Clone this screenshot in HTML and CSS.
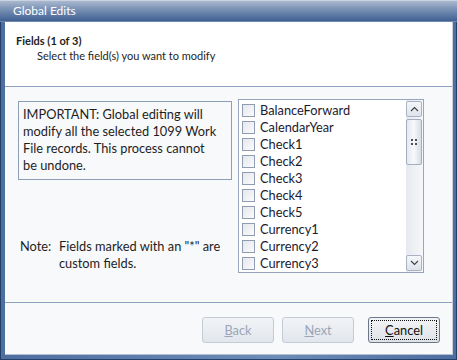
FILE: index.html
```html
<!DOCTYPE html>
<html lang="en">
<head>
    <meta charset="UTF-8">
    <title>Global Edits</title>
    <link rel="stylesheet" href="styles.css">
</head>
<body>
    <div class="window">
        <div class="titlebar">Global Edits</div>
        <div class="client">
            <div class="header">
                <div class="step-title">Fields (1 of 3)</div>
                <div class="step-desc">Select the field(s) you want to modify</div>
            </div>
            <div class="content">
                <div class="left-col">
                    <div class="warning">IMPORTANT: Global editing will modify all the selected 1099 Work File records. This process cannot be undone.</div>
                    <div class="note">
                        <span class="note-label">Note:</span>
                        <span class="note-text">Fields marked with an "*" are custom fields.</span>
                    </div>
                </div>
                <div class="listbox">
                    <ul class="items">
                        <li><span class="check"></span>BalanceForward</li>
                        <li><span class="check"></span>CalendarYear</li>
                        <li><span class="check"></span>Check1</li>
                        <li><span class="check"></span>Check2</li>
                        <li><span class="check"></span>Check3</li>
                        <li><span class="check"></span>Check4</li>
                        <li><span class="check"></span>Check5</li>
                        <li><span class="check"></span>Currency1</li>
                        <li><span class="check"></span>Currency2</li>
                        <li><span class="check"></span>Currency3</li>
                    </ul>
                    <div class="scrollbar">
                        <div class="sb-btn">
                            <svg width="9" height="6" viewBox="0 0 9 6"><path d="M1 5 L4.5 1.5 L8 5" fill="none" stroke="#3a3f4a" stroke-width="1.1"/></svg>
                        </div>
                        <div class="sb-thumb">
                            <svg width="6" height="6" viewBox="0 0 6 6"><g fill="#4a4f5a"><rect x="0" y="0" width="2" height="2"/><rect x="4" y="0" width="2" height="2"/><rect x="0" y="4" width="2" height="2"/><rect x="4" y="4" width="2" height="2"/></g></svg>
                        </div>
                        <div class="sb-track"></div>
                        <div class="sb-btn">
                            <svg width="9" height="6" viewBox="0 0 9 6"><path d="M1 1 L4.5 4.5 L8 1" fill="none" stroke="#3a3f4a" stroke-width="1.1"/></svg>
                        </div>
                    </div>
                </div>
            </div>
            <div class="footer">
                <button class="btn" disabled><u>B</u>ack</button>
                <button class="btn" disabled><u>N</u>ext</button>
                <button class="btn btn-focus"><span class="focus-ring"><u>C</u>ancel</span></button>
            </div>
        </div>
    </div>
</body>
</html>
```

FILE: styles.css
```css
/* Dialog frame */
body {
    margin: 0;
    font-family: Lato, "Noto Sans", sans-serif;
    font-size: 12.8px;
    color: #1e1e1e;
}

.window {
    width: 457px;
    height: 360px;
    box-sizing: border-box;
    border: 1px solid #23406b;
    background: linear-gradient(to right, #4d6e9f, #6c8bb8 60%, #4d6e9f);
    display: flex;
    flex-direction: column;
}

.titlebar {
    height: 20px;
    line-height: 19px;
    padding-left: 13px;
    color: #fff;
    font-size: 12px;
    background: linear-gradient(to bottom, #aab8ce, #7b93b6 40%, #3f6091);
    border-bottom: 1px solid #6d87ad;
    margin: -1px -1px 0 -1px;
    border-top: 1px solid #c9d3e2;
}

.client {
    flex: 1;
    margin: 0 3px 4px 4px;
    background: #f8f9fb;
    display: flex;
    flex-direction: column;
    border-right: 1px solid #c9d1de;
    border-bottom: 1px solid #b4bfd0;
}

/* Header strip */
.header {
    background: #fff;
    border-bottom: 1px solid #8ea1bd;
    padding: 11px 0 0 11px;
    box-sizing: border-box;
    height: 65px;
    font-size: 11px;
}

.step-title {
    font-weight: bold;
    line-height: 16px;
}

.step-desc {
    padding-left: 21px;
    line-height: 14px;
}

/* Main area */
.content {
    flex: 1;
    display: flex;
    padding: 12px 0 0 13px;
}

.left-col {
    width: 214px;
    display: flex;
    flex-direction: column;
}

.warning {
    margin-top: 2px;
    border: 1px solid #8d9fb8;
    padding: 4px 12px 5px 4px;
    line-height: 17px;
    height: 68px;
}

.note {
    display: flex;
    margin-top: 58px;
    padding-left: 2px;
    line-height: 17px;
}

.note-label {
    width: 39px;
    flex: none;
}

.note-text {
    width: 172px;
}

/* Checked list */
.listbox {
    margin-left: 6px;
    width: 184px;
    height: 172px;
    border: 1px solid #98a5ba;
    background: #fff;
    display: flex;
}

.items {
    flex: 1;
    list-style: none;
    margin: 0;
    padding: 2px 0 0 3px;
    overflow: hidden;
    color: #1a1a2e;
}

.items li {
    height: 17px;
    line-height: 17px;
    display: flex;
    align-items: center;
    white-space: nowrap;
}

.check {
    width: 11px;
    height: 11px;
    border: 1px solid #8f9cb1;
    background: linear-gradient(135deg, #e4e7ec, #fbfbfc);
    margin-right: 5px;
    flex: none;
}

.scrollbar {
    width: 16px;
    display: flex;
    flex-direction: column;
    background: linear-gradient(to right, #e6e9ef, #f6f7f9);
    padding: 1px 1px 1px 0;
}

.sb-btn {
    height: 16px;
    box-sizing: border-box;
    border: 1px solid #a8b2c3;
    border-radius: 2px;
    background: linear-gradient(to bottom, #f4f6f9, #dfe3ea);
    display: flex;
    align-items: center;
    justify-content: center;
}

.sb-thumb {
    height: 46px;
    margin-top: 2px;
    box-sizing: border-box;
    border: 1px solid #a3aec0;
    border-radius: 2px;
    background: linear-gradient(to right, #e5e9f0, #f7f8fa 50%, #d6dce6);
    display: flex;
    align-items: center;
    justify-content: center;
}

.sb-track {
    flex: 1;
}

/* Wizard buttons */
.footer {
    height: 52px;
    border-top: 1px solid #8ea1bd;
    display: flex;
    justify-content: flex-end;
    align-items: flex-start;
    padding: 14px 12px 0 0;
    box-sizing: border-box;
    gap: 8px;
}

.btn {
    width: 72px;
    height: 26px;
    font-family: inherit;
    font-size: 12.8px;
    border: 1px solid #c3cbd6;
    border-radius: 3px;
    background: linear-gradient(to bottom, #f1f3f6, #e2e6ec);
    color: #9aa6b8;
    padding: 0;
}

.btn u {
    text-decoration-thickness: 1px;
}

.btn-focus {
    margin-left: 6px;
    border-color: #6c7789;
    color: #111;
    background: linear-gradient(to bottom, #f3f4f6, #dde1e7);
    padding: 2px;
}

.focus-ring {
    display: flex;
    align-items: center;
    justify-content: center;
    height: 100%;
    box-sizing: border-box;
    border: 1px dotted #111;
}
```
